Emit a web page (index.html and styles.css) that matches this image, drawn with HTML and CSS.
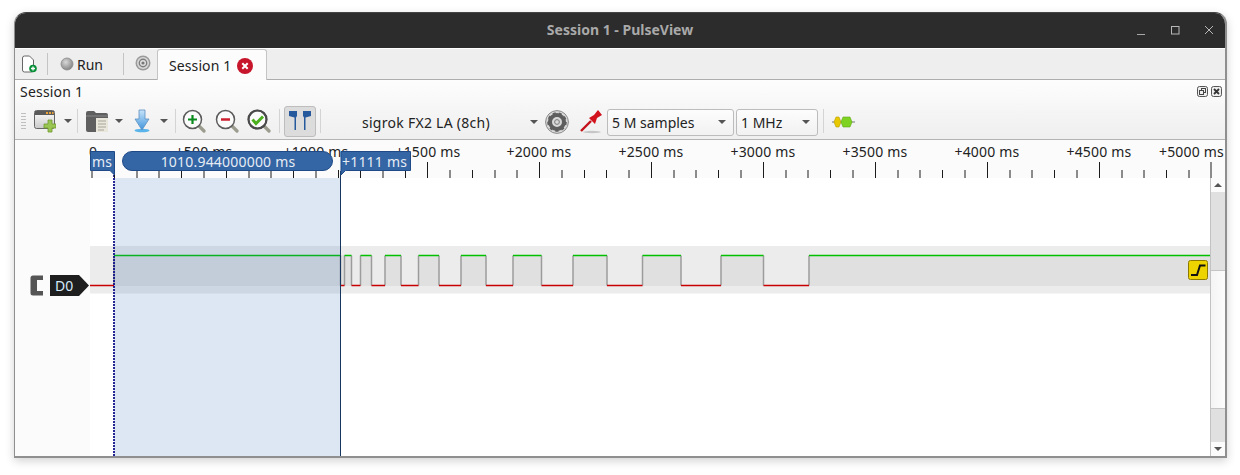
FILE: index.html
```html
<!DOCTYPE html>
<html lang="en">
<head>
<meta charset="utf-8">
<title>Session 1 - PulseView</title>
<link rel="stylesheet" href="styles.css">
</head>
<body>
<div class="window">
  <header class="titlebar">
    <span class="title">Session 1 - PulseView</span>
    <div class="winctl">
      <svg width="12" height="12" viewBox="0 0 12 12"><path d="M2 10.500h8" stroke="#a8a8a8" stroke-width="1"/></svg>
      <svg width="12" height="12" viewBox="0 0 12 12"><rect x="2.500" y="2.500" width="7.500" height="7.500" fill="none" stroke="#b8b8b8"/></svg>
      <svg width="12" height="12" viewBox="0 0 12 12"><path d="M2 2l8 8M10 2l-8 8" stroke="#b8b8b8" stroke-width="1"/></svg>
    </div>
  </header>

  <nav class="tabbar">
    <svg class="t-new" width="16" height="18" viewBox="0 0 16 18">
      <path d="M1.500 3a2 2 0 0 1 2-2h5l4 4v10a2 2 0 0 1-2 2h-7a2 2 0 0 1-2-2z" fill="#fff" stroke="#666"/>
      <circle cx="12" cy="13.500" r="3.800" fill="#0b8f3a"/>
      <path d="M10 13.500h4M12 11.500v4" stroke="#fff" stroke-width="1.300"/>
    </svg>
    <i class="vsep t-sep1"></i>
    <svg class="t-led" width="14" height="14" viewBox="0 0 14 14">
      <defs><radialGradient id="led" cx=".4" cy=".35" r=".7"><stop offset="0" stop-color="#d8d8d8"/><stop offset="1" stop-color="#808080"/></radialGradient></defs>
      <circle cx="7" cy="7" r="6" fill="url(#led)" stroke="#8a8a8a" stroke-width=".8"/>
    </svg>
    <span class="t-run">Run</span>
    <i class="vsep t-sep2"></i>
    <svg class="t-target" width="16" height="16" viewBox="0 0 16 16">
      <circle cx="8" cy="8" r="7.500" fill="#9a9a9a"/><circle cx="8" cy="8" r="6" fill="#d8d8d8"/><circle cx="8" cy="8" r="4.400" fill="#7d7d7d"/><circle cx="8" cy="8" r="3" fill="#e2e2e2"/><circle cx="8" cy="8" r="1.600" fill="#777"/>
    </svg>
    <div class="tab">
      <span>Session 1</span>
      <svg width="16" height="16" viewBox="0 0 16 16"><circle cx="8" cy="8" r="8" fill="#c7162b"/><path d="M5.300 5.300l5.400 5.400M10.700 5.300l-5.400 5.400" stroke="#fff" stroke-width="2"/></svg>
    </div>
  </nav>

  <div class="dockhead">
    <span>Session 1</span>
    <div class="dockbtns">
      <svg width="11" height="11" viewBox="0 0 11 11"><rect x=".5" y=".5" width="10" height="10" rx="2" fill="#eee" stroke="#555"/><rect x="4.500" y="2.500" width="4" height="4" fill="none" stroke="#444"/><rect x="2.500" y="4.500" width="4" height="4" fill="#eee" stroke="#444"/></svg>
      <svg width="11" height="11" viewBox="0 0 11 11"><rect x=".5" y=".5" width="10" height="10" rx="2" fill="#eee" stroke="#555"/><path d="M3 3l5 5M8 3l-5 5" stroke="#333" stroke-width="1.800"/></svg>
    </div>
  </div>

  <div class="toolbar">
    <i class="grip"></i>
    <svg class="b-new" width="22" height="24" viewBox="0 0 22 24">
      <defs><linearGradient id="win" x1="0" y1="0" x2="0" y2="1"><stop offset="0" stop-color="#fff"/><stop offset="1" stop-color="#c9c9c9"/></linearGradient></defs>
      <rect x=".5" y="1.500" width="20" height="18" rx="2" fill="url(#win)" stroke="#666"/>
      <rect x="1" y="2" width="19" height="4" fill="#5a5a5a"/>
      <path d="M12 3h2v2h-2zM15 3h2v2h-2zM18 3h1.500v2h-1.500z" fill="#e8a33a"/>
      <path d="M14 11h4v4h4v4h-4v4h-4v-4h-4v-4h4z" fill="#9ac552" stroke="#6f9a33" stroke-width=".8"/>
    </svg>
    <i class="caret b-c1"></i>
    <i class="vsep b-s1"></i>
    <svg class="b-open" width="24" height="24" viewBox="0 0 24 24">
      <path d="M1 4a2 2 0 0 1 2-2h6l2 2h10a2 2 0 0 1 2 2v16a1 1 0 0 1-1 1H3a2 2 0 0 1-2-2z" fill="#5f5f5f"/>
      <path d="M1 7h22" stroke="#8a8a8a"/>
      <path d="M11 9h12v14H11z" fill="#e9e6dc"/>
      <path d="M13 12h8M13 15h8M13 18h8M13 21h6" stroke="#a8a498"/>
    </svg>
    <i class="caret b-c2"></i>
    <svg class="b-down" width="16" height="24" viewBox="0 0 16 24">
      <defs><linearGradient id="arrow" x1="0" y1="0" x2="0" y2="1"><stop offset="0" stop-color="#c8e4fa"/><stop offset="1" stop-color="#3f94dc"/></linearGradient></defs>
      <ellipse cx="8" cy="21.500" rx="7.500" ry="1.800" fill="#5ab4ea"/>
      <path d="M5 1h6v9h4l-7 11-7-11h4z" fill="url(#arrow)" stroke="#5c8fc0" stroke-width=".8"/>
    </svg>
    <i class="caret b-c3"></i>
    <i class="vsep b-s2"></i>
    <svg class="b-zoom1" width="24" height="24" viewBox="0 0 24 24">
      <use href="#lens"/>
      <path d="M6 10.500h9M10.500 6v9" stroke="#0b8a1e" stroke-width="2.200"/>
    </svg>
    <svg class="b-zoom2" width="24" height="24" viewBox="0 0 24 24">
      <use href="#lens"/>
      <path d="M6 10.500h9" stroke="#cc1f2e" stroke-width="2.400"/>
    </svg>
    <svg class="b-zoom3" width="26" height="24" viewBox="0 0 24 24">
      <defs>
        <g id="lens">
          <path d="M16 16l6 6" stroke="#9b9b8e" stroke-width="3.200" stroke-linecap="round"/>
          <circle cx="10.500" cy="10.500" r="9" fill="#fbfbfb" stroke="#5c5c5c" stroke-width="1.500"/>
        </g>
      </defs>
      <use href="#lens"/>
      <circle cx="10.500" cy="10.500" r="9" fill="none" stroke="#4a4a4a" stroke-width="2.200"/>
      <path d="M5.500 10.500l3.500 4 7-7" fill="none" stroke="#4cb01e" stroke-width="3"/>
    </svg>
    <i class="vsep b-s3"></i>
    <div class="toggle">
      <svg width="24" height="20" viewBox="0 0 24 20">
        <path d="M1 0h8v5L8 6.500V19H6.500V6.500L1 5zM15 0h8v5l-5.500 1.500V19H16V6.500L15 5z" fill="#275a9c"/>
      </svg>
    </div>
    <i class="vsep b-s4"></i>
    <span class="device lower">sigrok FX2 LA (8ch)</span>
    <i class="caret lower"></i>
    <svg class="b-gear lower" width="24" height="24" viewBox="0 0 24 24">
      <circle cx="12" cy="12" r="11.400" fill="#d8d8d8" stroke="#8a8a8a"/>
      <circle cx="12" cy="12" r="7" fill="none" stroke="#5e5e5e" stroke-width="4"/>
      <circle cx="12" cy="12" r="8.600" fill="none" stroke="#5e5e5e" stroke-width="2.400" stroke-dasharray="3 3"/>
      <circle cx="12" cy="12" r="2.400" fill="none" stroke="#7a7a7a"/>
    </svg>
    <svg class="b-probe lower" width="22" height="24" viewBox="0 0 22 24">
      <ellipse cx="12" cy="22" rx="9" ry="1.200" fill="#c6c6c6"/>
      <path d="M1 21L11 11" stroke="#c4121a" stroke-width="2.400"/>
      <path d="M9 8l5-3 4-5 4 5-5 3-2 6z" fill="#d2121c"/>
    </svg>
    <div class="combo c-samples lower"><span>5 M samples</span><i class="caret"></i></div>
    <div class="combo c-rate lower"><span>1 MHz</span><i class="caret"></i></div>
    <i class="vsep b-s5"></i>
    <svg class="b-dec lower" width="23" height="12" viewBox="0 0 23 12">
      <path d="M0 6h23" stroke="#777"/>
      <path d="M2 6l2-5h3l2 5-2 5H4z" fill="#e8c800" stroke="#b79e00" stroke-width=".6"/>
      <path d="M9 6l2-5h7l2 5-2 5h-7z" fill="#7ed321" stroke="#5fa615" stroke-width=".6"/>
    </svg>
  </div>

  <div class="view">
    <svg class="canvas" width="1210" height="316" viewBox="15 140 1210 316">
      <rect class="panel" x="15" y="140" width="75" height="316"/>
      <rect class="ruler-bg" x="90" y="140" width="1135" height="38"/>
      <rect class="band" x="90" y="246" width="1120" height="47.500"/>
      <path class="fill" d="M114 255h230.500v31H114zM344.500 255h7v31h-7zM360.500 255h11v31h-11zM385 255h16v31h-16zM418.500 255h20.500v31h-20.500zM461 255h25v31h-25zM513 255h28.500v31H513zM573 255h34v31h-34zM642.500 255h38.500v31h-38.500zM721 255h42.500v31H721zM809 255h401v31H809z"/>
      <path class="edge" d="M114 255.500V285.500M340.500 255.500V285.500M344.500 255.500V285.500M351.500 255.500V285.500M360.500 255.500V285.500M371.500 255.500V285.500M385 255.500V285.500M401 255.500V285.500M418.500 255.500V285.500M439 255.500V285.500M461 255.500V285.500M486 255.500V285.500M513 255.500V285.500M541.500 255.500V285.500M573 255.500V285.500M607 255.500V285.500M642.500 255.500V285.500M681 255.500V285.500M721 255.500V285.500M763.500 255.500V285.500M809 255.500V285.500"/>
      <path class="high" d="M114 255.500H340.500M344.500 255.500H351.500M360.500 255.500H371.500M385 255.500H401M418.500 255.500H439M461 255.500H486M513 255.500H541.500M573 255.500H607M642.500 255.500H681M721 255.500H763.500M809 255.500H1210"/>
      <path class="low" d="M90 285.500H114M340.500 285.500H344.500M351.500 285.500H360.500M371.500 285.500H385M401 285.500H418.500M439 285.500H461M486 285.500H513M541.500 285.500H573M607 285.500H642.500M681 285.500H721M763.500 285.500H809"/>
      <rect class="selection" x="114" y="178" width="226.500" height="278"/>
      <path class="cursor-a" d="M114 172V456"/>
      <path class="cursor-b" d="M340.500 171V456"/>

      <path class="tick" d="M92 162V178M114.500 170V178M137 170V178M159 170V178M181.500 170V178M204 162V178M226.500 170V178M249 170V178M271 170V178M293.500 170V178M316 162V178M338.500 170V178M360.500 170V178M383 170V178M405.500 170V178M427.500 162V178M450 170V178M472.500 170V178M495 170V178M517 170V178M539.500 162V178M562 170V178M584.500 170V178M606.500 170V178M629 170V178M651.500 162V178M674 170V178M696 170V178M718.500 170V178M741 170V178M763.500 162V178M786 170V178M808 170V178M830.500 170V178M853 170V178M875.500 162V178M898 170V178M920 170V178M942.500 170V178M965 170V178M987.500 162V178M1010 170V178M1032 170V178M1054.500 170V178M1077 170V178M1099.500 162V178M1122 170V178M1144 170V178M1166.500 170V178M1189 170V178M1211 162V178"/>
      <g class="rlabels">
        <text x="93" y="157">0</text>
        <text x="204" y="157">+500 ms</text>
        <text x="316" y="157">+1000 ms</text>
        <text x="428" y="157">+1500 ms</text>
        <text x="539" y="157">+2000 ms</text>
        <text x="651" y="157">+2500 ms</text>
        <text x="763" y="157">+3000 ms</text>
        <text x="875" y="157">+3500 ms</text>
        <text x="987" y="157">+4000 ms</text>
        <text x="1099" y="157">+4500 ms</text>
        <text x="1191.500" y="157">+5000 ms</text>
      </g>

      <path class="flag" d="M90.500 151.500H114.500V175L110 170.500H90.500z"/>
      <text class="flagtext" x="92" y="167">ms</text>
      <rect class="flag" x="122.500" y="151.500" width="210" height="19" rx="9.500"/>
      <text class="flagtext mid" x="228" y="167">1010.944000000 ms</text>
      <path class="flag" d="M341 175V151.500H410.500V170.500H345.500z"/>
      <text class="flagtext" x="342" y="167">+1111 ms</text>

      <path class="conn" d="M30.500 278a2.500 2.500 0 0 1 2.500-2.500H43V280H37V291H43V295.500H33a2.500 2.500 0 0 1-2.500-2.500z"/>
      <path class="d0" d="M50 275H79L89 285.500L79 296H50z"/>
      <text class="d0text" x="55" y="291">D0</text>

      <rect class="trig" x="1188.500" y="260.500" width="19" height="19" rx="2"/>
      <path class="trigmark" d="M1191 275H1197L1200 265.500H1205.500"/>
    </svg>
    <div class="scrollbar">
      <div class="sb-btn"><i class="up"></i></div>
      <div class="sb-handle"></div>
      <div class="sb-trough"></div>
      <div class="sb-handle2"></div>
      <div class="sb-btn"><i class="down"></i></div>
    </div>
  </div>
</div>
</body>
</html>
```
FILE: styles.css
```css
* { box-sizing: border-box; }
html, body { margin: 0; height: 100%; background: #fff; overflow: hidden; }
body { padding: 12px 0 0 14px; font-family: "Noto Sans", "Open Sans", sans-serif; font-size: 14px; color: #222; }
i { display: block; flex: none; }
svg { display: block; flex: none; }

.window {
  width: 1213px;
  height: 446px;
  border: 1px solid #8f8f8f;
  border-top-color: #444;
  border-right-width: 2px;
  border-bottom-width: 2px;
  border-radius: 12px 12px 0 0;
  box-shadow: 0 3px 10px rgba(0,0,0,.18);
  background: #fff;
  overflow: hidden;
  display: flex;
  flex-direction: column;
}

.titlebar {
  flex: none;
  height: 35px;
  background: #2c2c2c;
  display: flex;
  align-items: center;
  justify-content: center;
  position: relative;
}
.title { color: #a9a9a9; font-weight: 700; font-size: 14px; margin-top: -2px; }
.winctl { position: absolute; right: 10px; top: 11px; display: flex; gap: 22px; }

.tabbar {
  flex: none;
  height: 31px;
  margin-top: 1px;
  background: #eeeeee;
  border-bottom: 1px solid #adadad;
  display: flex;
  align-items: center;
}
.t-new { margin-left: 6px; margin-top: -1px; }
.vsep { width: 1px; height: 22px; background: #c4c4c4; }
.t-sep1 { margin-left: 10px; }
.t-led { margin-left: 12px; }
.t-run { margin-left: 3px; width: 26px; }
.t-sep2 { margin-left: 20px; }
.t-target { margin-left: 11px; margin-top: -2px; }
.tab {
  margin-left: 6px;
  height: 31px;
  width: 110px;
  align-self: flex-start;
  background: #fcfcfc;
  border: 1px solid #c4c4c4;
  border-bottom: none;
  border-radius: 3px 3px 0 0;
  display: flex;
  align-items: center;
  padding: 1px 0 0 11px;
  gap: 6px;
  letter-spacing: .1px;
}

.dockhead {
  flex: none;
  height: 23px;
  padding: 0 3px 0 5px;
  background: linear-gradient(#fdfdfd, #f8f8f8);
  display: flex;
  align-items: center;
  justify-content: space-between;
  letter-spacing: .2px;
}
.dockbtns { display: flex; gap: 3px; }

.toolbar {
  flex: none;
  height: 37px;
  background: linear-gradient(#f7f7f7, #efefef);
  border-bottom: 1px solid #b4b4b4;
  display: flex;
  align-items: center;
}
.toolbar .vsep { height: 24px; background: #d4d4d4; }
.lower { margin-top: 2px; }
.grip {
  width: 5px;
  height: 18px;
  margin-left: 6px;
  background-image: radial-gradient(circle, #b9b9b9 .8px, transparent 1px);
  background-size: 2.500px 3px;
}
.caret {
  width: 0;
  height: 0;
  border-left: 4px solid transparent;
  border-right: 4px solid transparent;
  border-top: 4px solid #555;
}
.b-new { margin-left: 8px; }
.b-c1 { margin-left: 8px; }
.b-s1 { margin-left: 5px; }
.b-open { margin-left: 7px; }
.b-c2 { margin-left: 6px; }
.b-down { margin-left: 11px; }
.b-c3 { margin-left: 10px; }
.b-s2 { margin-left: 7px; }
.b-zoom1 { margin-left: 6px; }
.b-zoom2 { margin-left: 9px; }
.b-zoom3 { margin-left: 7px; }
.b-s3 { margin-left: 7px; }
.toggle {
  margin-left: 4px;
  width: 32px;
  height: 31px;
  background: #dcdcdc;
  border: 1px solid #bdbdbd;
  border-radius: 3px;
  display: flex;
  align-items: center;
  justify-content: center;
}
.b-s4 { margin-left: 4px; }
.device { margin-left: 41px; width: 168px; letter-spacing: .27px; }
.b-gear { margin-left: 7px; }
.b-probe { margin-left: 11px; }
.combo {
  height: 27px;
  background: linear-gradient(#fdfdfd, #f1f1f1);
  border: 1px solid #bcbcbc;
  border-radius: 3px;
  display: flex;
  align-items: center;
  justify-content: space-between;
  padding: 0 7px 0 4px;
}
.c-samples { width: 127px; margin-left: 5px; }
.c-rate { width: 82px; margin-left: 2px; }
.b-s5 { margin-left: 5px; }
.b-dec { margin-left: 8px; }

.view { flex: 1; min-height: 0; position: relative; }
.canvas { background: #fff; }
.panel, .ruler-bg { fill: #fbfbfb; }
.band { fill: #ececec; }
.fill { fill: #e0e0e0; }
.edge { fill: none; stroke: #9c9c9c; stroke-width: 1.500; }
.high { fill: none; stroke: #00c000; stroke-width: 1.400; }
.low { fill: none; stroke: #c80000; stroke-width: 1.400; }
.selection { fill: rgba(53, 110, 190, .17); }
.cursor-a { fill: none; stroke: #10108a; stroke-width: 1.800; stroke-dasharray: 2 1; }
.cursor-b { fill: none; stroke: #16365f; stroke-width: 1; }
.tick { fill: none; stroke: #1c1c1c; stroke-width: 1; }
.rlabels text { font-size: 14px; fill: #222; text-anchor: middle; letter-spacing: .2px; }
.flag { fill: #3465a4; stroke: #204a87; stroke-width: 1; }
.flagtext { font-size: 14px; fill: #e6ecf4; letter-spacing: .2px; }
.flagtext.mid { text-anchor: middle; }
.conn { fill: #555; }
.d0 { fill: #1e1e1e; }
.d0text { font-size: 14px; fill: #d6ebfa; }
.trig { fill: #edd400; stroke: #8f7a00; stroke-width: 1; }
.trigmark { fill: none; stroke: #111; stroke-width: 2; }

.scrollbar {
  position: absolute;
  left: 1195px;
  right: 0;
  top: 38px;
  bottom: 0;
  display: flex;
  flex-direction: column;
  border-left: 1px solid #c2c2c2;
  background: #fff;
}
.sb-btn { flex: none; height: 14px; display: flex; align-items: center; justify-content: center; background: #fbfbfb; }
.sb-btn .up { width: 0; height: 0; border-left: 4px solid transparent; border-right: 4px solid transparent; border-bottom: 4px solid #555; }
.sb-btn .down { width: 0; height: 0; border-left: 4px solid transparent; border-right: 4px solid transparent; border-top: 4px solid #555; }
.sb-handle { flex: none; height: 79px; background: #e0e0e0; border-bottom: 1px solid #c4c4c4; }
.sb-trough { flex: 1; background: linear-gradient(90deg, #f4f4f4, #fcfcfc); }
.sb-handle2 { flex: none; height: 34px; background: #e0e0e0; border-top: 1px solid #c4c4c4; }
```
